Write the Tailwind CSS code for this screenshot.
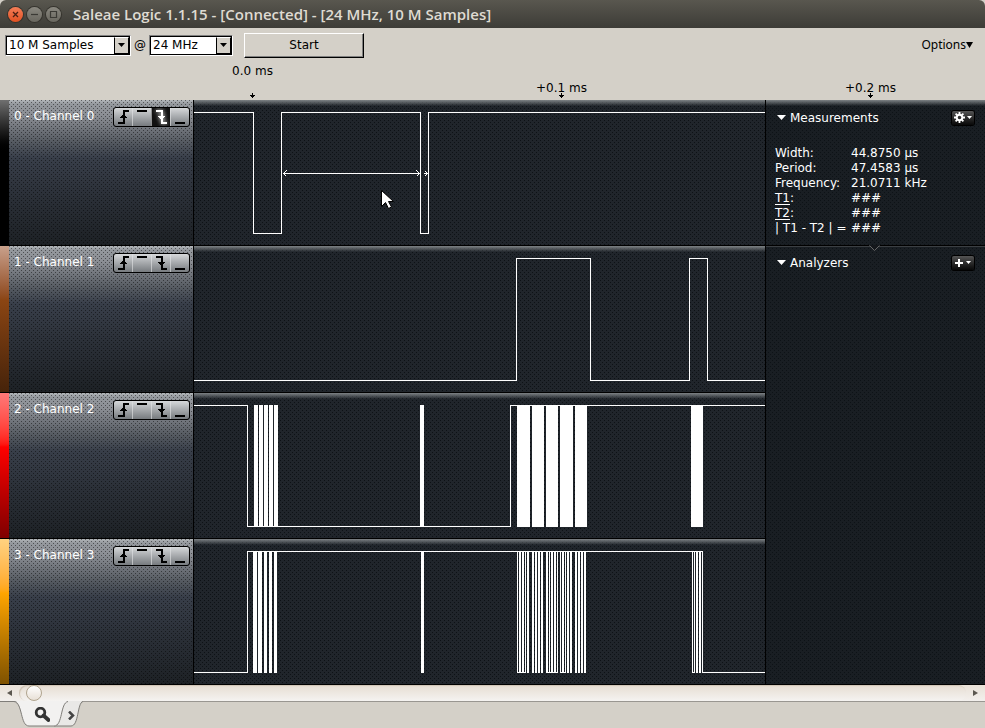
<!DOCTYPE html>
<html lang="en">
<head>
<meta charset="utf-8">
<title>Saleae Logic 1.1.15</title>
<script src="https://cdn.jsdelivr.net/npm/@tailwindcss/browser@4"></script>
</head>
<body class="flex min-h-screen flex-col overflow-hidden bg-[#d4d0c8] font-['DejaVu_Sans',sans-serif] text-xs text-black">

<svg class="hidden" aria-hidden="true">
  <symbol id="rise" viewBox="0 0 19 18"><path d="M4 15h6V3h5" fill="none" stroke="currentColor" stroke-width="2"/><path d="M6 10h7L10 6H9z" fill="currentColor"/></symbol>
  <symbol id="high" viewBox="0 0 19 18"><path d="M4 3h10" fill="none" stroke="currentColor" stroke-width="2"/></symbol>
  <symbol id="fall" viewBox="0 0 19 18"><path d="M4 3h6v12h5" fill="none" stroke="currentColor" stroke-width="2"/><path d="M6 8h7l-3 4H9z" fill="currentColor"/></symbol>
  <symbol id="low" viewBox="0 0 19 18"><path d="M4 15h10" fill="none" stroke="currentColor" stroke-width="2"/></symbol>
  <symbol id="tick" viewBox="0 0 5 5"><path d="M2 0h1v2h2v1H4v1H3v1H2V4H1V3H0V2h2z" fill="#000"/></symbol>
</svg>

<header class="flex h-7 items-center rounded-t-md bg-linear-to-b from-[#59574f] to-[#3d3c37] pl-2">
  <div class="flex gap-1">
    <button aria-label="Close" class="size-[15px] rounded-full bg-linear-to-b from-[#f47d56] to-[#e2501f] shadow-[0_0_0_1px_#35332d]"><svg viewBox="0 0 15 15"><path d="M5 5l5 5M10 5l-5 5" stroke="#4a2013" stroke-width="1.3"/></svg></button>
    <button aria-label="Minimize" class="size-[15px] rounded-full bg-linear-to-b from-[#8a8880] to-[#69675f] shadow-[0_0_0_1px_#35332d]"><svg viewBox="0 0 15 15"><path d="M4 7.5h7" stroke="#3b3a35" stroke-width="1.2"/></svg></button>
    <button aria-label="Maximize" class="size-[15px] rounded-full bg-linear-to-b from-[#8a8880] to-[#69675f] shadow-[0_0_0_1px_#35332d]"><svg viewBox="0 0 15 15"><path d="M4.500 4.500h6v6h-6z" fill="none" stroke="#3b3a35" stroke-width="1.2"/></svg></button>
  </div>
  <h1 class="ml-3 whitespace-nowrap font-['Open_Sans',sans-serif] text-[15px] leading-7 font-semibold text-[#dfdbd2]">Saleae Logic 1.1.15 - [Connected] - [24 MHz, 10 M Samples]</h1>
</header>

<div class="flex h-[34px] items-center pr-3 pl-[5px]">
  <div class="relative h-[21px] w-[126px] border border-t-[#808080] border-r-white border-b-white border-l-[#808080]">
    <select aria-label="Sample count" class="h-full w-full appearance-none border border-black bg-white pl-[2px] leading-4"><option>10 M Samples</option></select>
    <span class="pointer-events-none absolute top-px right-px flex h-[17px] w-[15px] items-center justify-center border border-t-white border-r-black border-b-black border-l-black bg-[#d4d0c8]"><svg class="h-1 w-[7px]" viewBox="0 0 7 4"><path d="M0 0h7L3.500 4z"/></svg></span>
  </div>
  <span class="w-[18px] text-center">@</span>
  <div class="relative h-[21px] w-[84px] border border-t-[#808080] border-r-white border-b-white border-l-[#808080]">
    <select aria-label="Sample rate" class="h-full w-full appearance-none border border-black bg-white pl-[2px] leading-4"><option>24 MHz</option></select>
    <span class="pointer-events-none absolute top-px right-px flex h-[17px] w-[15px] items-center justify-center border border-t-white border-r-black border-b-black border-l-black bg-[#d4d0c8]"><svg class="h-1 w-[7px]" viewBox="0 0 7 4"><path d="M0 0h7L3.500 4z"/></svg></span>
  </div>
  <button class="ml-[11px] h-[25px] w-[120px] border border-t-white border-r-black border-b-black border-l-white bg-[#d4d0c8] shadow-[inset_-1px_-1px_0_#808080]">Start</button>
  <button class="ml-auto flex items-center font-['Noto_Sans',sans-serif]">Options<svg class="h-[6px] w-[7px]" viewBox="0 0 7 6"><path d="M0 0h7L3.500 6z"/></svg></button>
</div>

<div class="flex h-[38px] overflow-hidden pl-[98px] text-center leading-4">
  <div class="flex w-[309px] shrink-0 flex-col items-center justify-between pt-px pb-[2px]">0.0 ms<svg class="size-[5px]"><use href="#tick"/></svg></div>
  <div class="relative w-[309px] shrink-0 pt-[18px]">+0.1 ms<svg class="absolute bottom-[2px] left-[152px] size-[5px]"><use href="#tick"/></svg></div>
  <div class="relative w-[309px] shrink-0 pt-[18px]">+0.2 ms<svg class="absolute bottom-[2px] left-[152px] size-[5px]"><use href="#tick"/></svg></div>
</div>

<main class="flex flex-1 bg-[#20252b] bg-[radial-gradient(circle_at_0_0,#0d1115_1px,transparent_1px),radial-gradient(circle_at_0_0,#0d1115_1px,transparent_1px)] [background-position:0_0,2px_2px] [background-size:4px_4px] text-white">
  <div id="channels" class="grid min-w-0 flex-1 auto-rows-fr"></div>

  <aside class="w-[220px] shrink-0 border-b border-l border-black bg-[#101318]/40">
    <section class="relative border-b border-black bg-linear-to-b from-[#7d8285] to-transparent to-[6px] pt-[10px] pr-[11px] pb-[9px] pl-[9px]">
      <div class="flex h-[15px] items-center">
        <button class="flex items-center gap-[4px] pl-[2px]"><svg class="h-[5px] w-[9px]" viewBox="0 0 9 5"><path d="M0 0h9L4.500 5z" fill="#fff"/></svg>Measurements</button>
        <button aria-label="Measurement settings" class="ml-auto flex h-[14px] w-[22px] items-center justify-center gap-[2px] rounded-xs bg-linear-to-b from-[#555] to-[#080808] shadow-[0_0_0_1px_#000]"><svg class="size-[11px]" viewBox="0 0 11 11"><circle cx="5.500" cy="5.500" r="2.800" fill="none" stroke="#fff" stroke-width="2"/><path d="M5.500 0v2M5.500 9v2M0 5.500h2M9 5.500h2M1.600 1.600l1.500 1.500M7.900 7.900l1.500 1.500M9.400 1.600L7.900 3.100M3.100 7.900L1.600 9.400" stroke="#fff" stroke-width="1.800"/></svg><svg class="h-[3px] w-[5px]" viewBox="0 0 5 3"><path d="M0 0h5L2.500 3z" fill="#fff"/></svg></button>
      </div>
      <table class="mt-[21px] w-full text-left leading-[15px] whitespace-nowrap">
        <tbody>
          <tr><th class="w-[76px] font-normal">Width:</th><td>44.8750 µs</td></tr>
          <tr><th class="font-normal">Period:</th><td>47.4583 µs</td></tr>
          <tr><th class="font-normal">Frequency:</th><td>21.0711 kHz</td></tr>
          <tr><th class="font-normal"><u class="underline-offset-2">T1</u>:</th><td>###</td></tr>
          <tr><th class="font-normal"><u class="underline-offset-2">T2</u>:</th><td>###</td></tr>
          <tr><th class="font-normal">| T1 - T2 | =</th><td>###</td></tr>
        </tbody>
      </table>
      <svg class="absolute -bottom-[6px] left-[103px] h-[6px] w-[11px]" viewBox="0 0 11 6"><path d="M0 0h11L5.500 5z" fill="#14171b"/><path d="M.5.500l5 5 5-5" fill="none" stroke="#666"/></svg>
    </section>
    <section class="border-t border-[#3b3f43] pt-[8px] pr-[11px] pl-[9px]">
      <div class="flex h-[15px] items-center">
        <button class="flex items-center gap-[4px] pl-[2px]"><svg class="h-[5px] w-[9px]" viewBox="0 0 9 5"><path d="M0 0h9L4.500 5z" fill="#fff"/></svg>Analyzers</button>
        <button aria-label="Add analyzer" class="ml-auto flex h-[14px] w-[22px] items-center justify-center gap-[3px] rounded-xs bg-linear-to-b from-[#555] to-[#080808] shadow-[0_0_0_1px_#000]"><svg class="size-2" viewBox="0 0 8 8"><path d="M4 0v8M0 4h8" stroke="#fff" stroke-width="2"/></svg><svg class="h-[3px] w-[5px]" viewBox="0 0 5 3"><path d="M0 0h5L2.500 3z" fill="#fff"/></svg></button>
      </div>
    </section>
  </aside>
</main>

<div class="flex h-4 items-center bg-linear-to-b from-[#e9e1d7] to-[#f3f0ed]">
  <button aria-label="Scroll left" class="flex w-[19px] justify-center"><svg class="h-[6px] w-[5px]" viewBox="0 0 5 6"><path d="M5 0v6L0 3z" fill="#5c5850"/></svg></button>
  <input type="range" aria-label="Timeline position" min="0" max="1000" value="7" class="h-4 min-w-0 flex-1 appearance-none rounded-lg bg-linear-to-b from-[#e6ddd2] to-[#f5f3f1] shadow-[inset_1px_1px_1px_#cfc4b4] [&::-webkit-slider-thumb]:size-4 [&::-webkit-slider-thumb]:appearance-none [&::-webkit-slider-thumb]:rounded-full [&::-webkit-slider-thumb]:border [&::-webkit-slider-thumb]:border-[#b0a48e] [&::-webkit-slider-thumb]:bg-linear-to-b [&::-webkit-slider-thumb]:from-white [&::-webkit-slider-thumb]:to-[#e8e0d6]">
  <button aria-label="Scroll right" class="flex w-[19px] justify-center"><svg class="h-[6px] w-[5px]" viewBox="0 0 5 6"><path d="M0 0v6l5-3z" fill="#5c5850"/></svg></button>
</div>

<nav class="relative flex h-[27px] border-t border-[#999691]" aria-label="Views">
  <svg class="absolute -top-px left-0 h-[27px] w-[90px]" viewBox="0 0 90 27">
    <path d="M56 0H83C77 1 79 25 71 25H54z" fill="#e9e8e6"/>
    <path d="M83 .5C77 2 79 25 71 25H54" fill="none" stroke="#7f7d79"/>
    <path d="M15 0C23 2 20 25 29 25H54C63 25 60 2 68 0z" fill="#f2f1f0"/>
    <path d="M0 .5H14C23 2 20 25 29 25H54C63 25 60 2 68 .5" fill="none" stroke="#7f7d79"/>
  </svg>
  <button aria-label="Search" class="relative ml-[22px] flex w-10 items-center justify-center"><svg class="size-4" viewBox="0 0 16 16"><circle cx="6.500" cy="5.500" r="4.300" fill="none" stroke="#333" stroke-width="2.800"/><path d="M9.500 8.500l5 4.500" stroke="#333" stroke-width="3.800" stroke-linecap="round"/></svg></button>
  <button aria-label="Next view" class="relative flex w-[18px] items-center justify-center"><svg class="h-[9px] w-[7px]" viewBox="0 0 7 9"><path d="M1 .5l4 4-4 4" fill="none" stroke="#444" stroke-width="2.500"/></svg></button>
</nav>

<script>
  // Bars are [x, width] pairs drawn at full signal height.
  const bars = list => list.map(([x, w]) => `<path d="M${x} 0h${w}v122h-${w}z" fill="#fff"/>`).join('');
  const channels = [
    { strip: 'bg-linear-to-b from-[#707070] to-black to-[54px]', active: 2,
      line: 'M0 .5H59.500V121.500H87.500V.5H226.500V121.500H234.500V.5H4000',
      extra: `<path d="M89 61.500H225M92.500 58.500l-3 3 3 3M222.500 58.500l3 3-3 3" fill="none" stroke="#fff"/>
        <path d="M231 59h1v1h1v1h1v1h-1v1h-1v1h-1v-1h1v-1h-2v-1h2v-1h-1z" fill="#fff"/>
        <path d="M187.500 78.500v16l4-4 3 6 3-1.500-3-5.500h5z" fill="#fff" stroke="#000" shape-rendering="auto"/>` },
    { strip: 'bg-linear-to-b from-[#c9a18c] via-[#8b4513] via-[54px] to-[#46230a]',
      line: 'M0 122.500H322.500V.5H396.500V122.500H495.500V.5H513.500V122.500H4000', extra: '' },
    { strip: 'bg-linear-to-b from-[#ff7878] via-[#ff0000] via-[54px] to-[#7f0000]',
      line: 'M0 .5H53.500V121.500H316.500V.5H4000',
      extra: bars([[60,4],[65,4],[70,4],[75,4],[80,4],[226,4],[323,13],[338,12],[352,12],[366,13],[381,12],[497,12]]) },
    { strip: 'bg-linear-to-b from-[#ffd280] via-[#ffa500] via-[54px] to-[#7f5200]',
      line: 'M0 121.500H53.500V.5H508.500V121.500H4000M323 121.500h9M352 121.500h12M366 121.500h6M498 121.500h3',
      extra: bars([[59,4],[64,4],[70,3],[75,3],[80,3],[227,3],[323,1],[325,2],[328,2],[331,1],[333,2],[338,2],[341,2],[344,2],[347,2],[352,2],[355,1],[357,2],[360,2],[363,1],[366,1],[368,2],[371,1],[373,2],[376,2],[381,2],[384,2],[387,2],[390,2],[498,1],[500,1],[502,2],[505,2]]) }
  ];
  const triggers = [['rise', 'Rising edge'], ['high', 'High'], ['fall', 'Falling edge'], ['low', 'Low']];
  document.getElementById('channels').innerHTML = channels.map((c, i) => `
    <div class="flex min-w-0 overflow-hidden">
      <div class="w-[9px] shrink-0 border-b border-black ${c.strip}"></div>
      <div class="flex w-[185px] shrink-0 items-start justify-between border-r border-b border-black bg-[radial-gradient(circle_at_0_0,#0007_1px,transparent_1px),radial-gradient(circle_at_0_0,#0007_1px,transparent_1px),linear-gradient(to_bottom,#b4b8bb_0,#94989d_4px,#8c8f95_15px,#555a61_42px,#383e49_58px,#2b3038_95px,#1d2125_100%)] [background-position:0_0,2px_2px,0_0] [background-size:4px_4px,4px_4px,auto] pt-[7px] pr-[3px] pl-[5px]">
        <h2 class="pt-px leading-[17px]">${i} - Channel ${i}</h2>
        <div class="flex h-5 w-[77px] overflow-hidden rounded-[3px] border border-black bg-linear-to-b from-[#d6d8da] to-[#777b7f] text-black">
          ${triggers.map(([id, name], t) => `<button aria-label="${name}" class="min-w-0 flex-1 ${t === c.active ? 'bg-[#111] text-white' : ''} ${t ? 'border-l border-[#e2e4e6]/60' : ''}"><svg class="h-[18px] w-[19px] ${t === c.active ? 'drop-shadow-[0_0_2px_#fff]' : ''}" shape-rendering="crispEdges"><use href="#${id}"/></svg></button>`).join('')}
        </div>
      </div>
      <div class="min-w-0 flex-1 border-b border-black bg-linear-to-b from-[#7d8285] to-transparent to-[6px] pt-3">
        <svg class="h-[123px] w-full" shape-rendering="crispEdges"><path d="${c.line}" fill="none" stroke="#fff"/>${c.extra}</svg>
      </div>
    </div>`).join('');
</script>
</body>
</html>
